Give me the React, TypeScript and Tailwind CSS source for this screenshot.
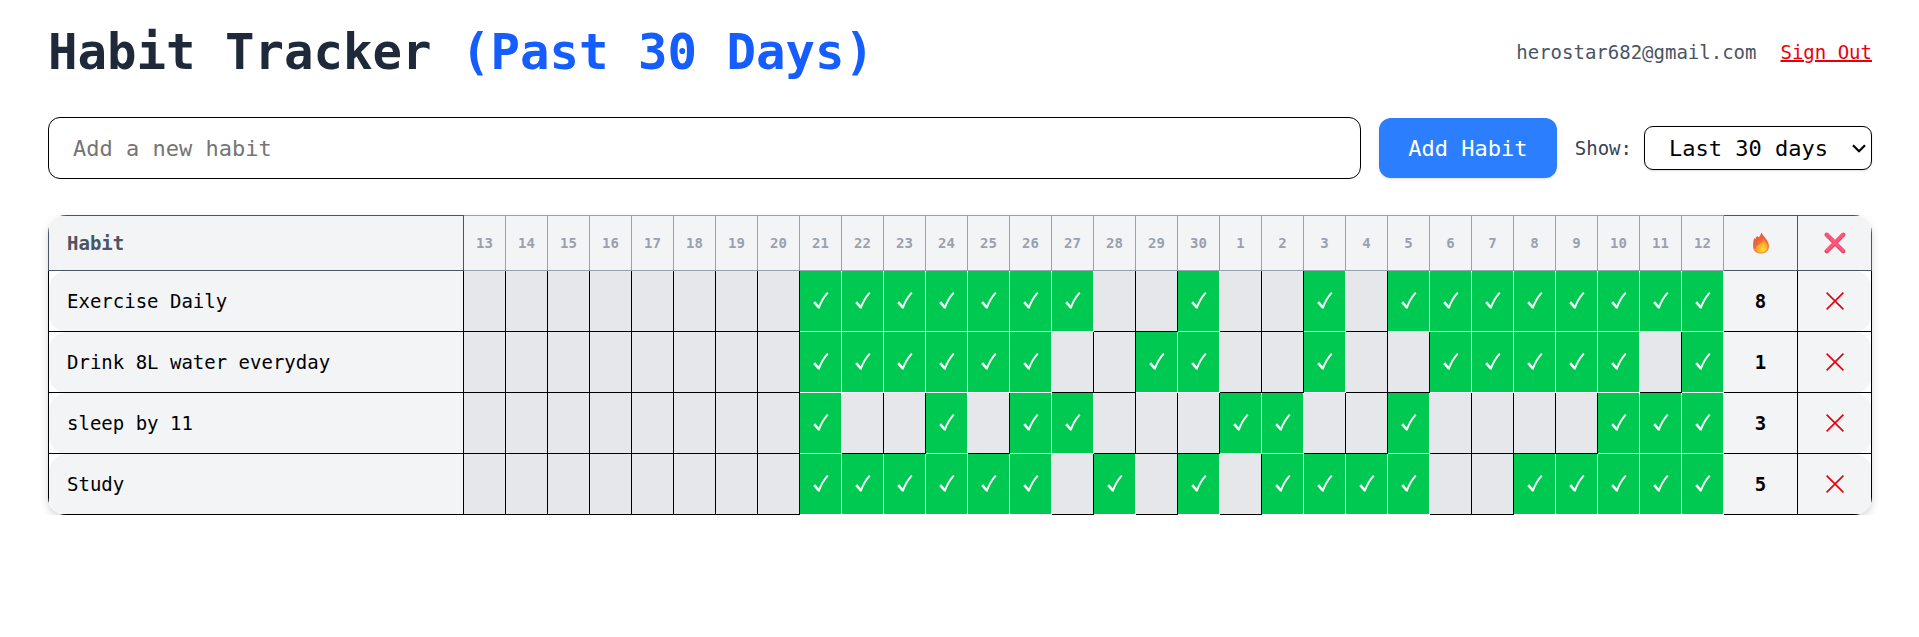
import React from "react";

const days = [13, 14, 15, 16, 17, 18, 19, 20, 21, 22, 23, 24, 25, 26, 27, 28, 29, 30, 1, 2, 3, 4, 5, 6, 7, 8, 9, 10, 11, 12];

const habits = [
  { name: "Exercise Daily", marks: "000000001111111001001011111111", streak: 8 },
  { name: "Drink 8L water everyday", marks: "000000001111110011001001111101", streak: 1 },
  { name: "sleep by 11", marks: "000000001001011000110010000111", streak: 3 },
  { name: "Study", marks: "000000001111110101011110011111", streak: 5 },
];

function Check() {
  return (
    <svg viewBox="0 0 16 18" className="mx-auto h-[18px] w-4" fill="none" stroke="currentColor" aria-hidden="true">
      <path d="M1.200 10.200 L6 15.600" strokeWidth="2.500" />
      <path d="M5.600 16.400 C7.600 10.800 10.600 5 14.800 .6" strokeWidth="1.900" />
    </svg>
  );
}

function Cross() {
  return (
    <svg viewBox="0 0 18 18" className="mx-auto size-[18px]" fill="none" stroke="currentColor" strokeWidth="1.600" aria-hidden="true">
      <path d="M.6 .6 L17.400 17.400 M17.400 .6 L.6 17.400" />
    </svg>
  );
}

function Flame() {
  return (
    <svg viewBox="0 0 18 22" className="mx-auto h-[22px] w-[18px]" role="img" aria-label="Streak">
      <defs>
        <linearGradient id="flame" x1="0.5" y1="0" x2="0.5" y2="1">
          <stop offset="0" stopColor="#ee4f43" />
          <stop offset="0.5" stopColor="#f37038" />
          <stop offset="1" stopColor="#f88a35" />
        </linearGradient>
        <radialGradient id="glow" cx="0.6" cy="0.8" r="0.75">
          <stop offset="0" stopColor="#ffdf2e" />
          <stop offset="0.5" stopColor="#ffb52a" />
          <stop offset="1" stopColor="#f67a38" />
        </radialGradient>
      </defs>
      <path fill="url(#flame)" d="M9.600 .4C10.400 3.600 17 8 17 14.200c0 4.400-3.400 7.400-8 7.400S1 18.600 1 14.200C1 10.800 1.200 7.800 2.800 5.800l.4 1.600C3.600 5.800 4.400 4.600 5.800 4l.4 1.600C7.400 4.400 9 2.400 9.600 .4Z" />
      <path fill="none" stroke="#c9583a" strokeWidth=".7" d="M6.200 5.600C4.800 8 4.200 10 5 13M3.200 7.400C2.200 10 2.200 13 3.600 16" />
      <path fill="url(#glow)" d="M11 6.400c2.600 3.200 5 6 4.600 9.200-.4 3.200-2.800 5-6.200 5-3.400 0-5.600-1.600-5.600-4 0-2.600 2.200-3 4.200-4.600 2-1.400 3-3 3-5.600Z" />
    </svg>
  );
}

function BigCross() {
  return (
    <svg viewBox="0 0 22 22" className="mx-auto size-[22px]" fill="none" strokeLinecap="round" role="img" aria-label="Delete">
      <path d="M2.800 2.800 L19.200 19.200 M19.200 2.800 L2.800 19.200" stroke="#ea4458" strokeWidth="4.400" />
      <path d="M3 2.600 L19 18.600 M19 2.600 L3 18.600" stroke="#ff5585" strokeWidth="2.800" />
    </svg>
  );
}

export default function App() {
  return (
    <main className="bg-white pt-6 pr-[47px] pl-12 font-['DejaVu_Sans_Mono',monospace] text-[19px] text-black">
      <header className="mb-9 flex items-center justify-between">
        <h1 className="text-[49px] leading-[57px] font-bold text-gray-800">
          Habit Tracker <span className="text-blue-600">(Past 30 Days)</span>
        </h1>
        <div className="flex items-center gap-6">
          <span className="text-gray-600">herostar682@gmail.com</span>
          <button type="button" className="text-red-600 underline decoration-2">Sign Out</button>
        </div>
      </header>

      <form className="mb-9 flex items-center gap-[18px]" onSubmit={(e) => e.preventDefault()}>
        <input
          type="text"
          aria-label="New habit"
          placeholder="Add a new habit"
          className="h-[62px] min-w-0 flex-1 rounded-xl border border-black px-6 text-[22px] placeholder:text-[#757575]"
        />
        <button type="submit" className="h-[60px] w-[178px] rounded-xl bg-blue-500 text-[22px] text-white shadow-sm">
          Add Habit
        </button>
        <div className="flex items-center gap-3">
          <label htmlFor="range" className="text-gray-700">Show:</label>
          <div className="relative">
            <select
              id="range"
              defaultValue="30"
              className="h-11 w-[228px] appearance-none rounded-[9px] border border-black bg-white pl-6 text-[22px] shadow-sm"
            >
              <option value="7">Last 7 days</option>
              <option value="30">Last 30 days</option>
            </select>
            <svg
              viewBox="0 0 14 9"
              className="pointer-events-none absolute inset-y-0 right-1.5 my-auto h-[9px] w-3.5"
              fill="none"
              stroke="currentColor"
              strokeWidth="2.200"
              aria-hidden="true"
            >
              <path d="M1 1.200 L7 7.200 L13 1.200" />
            </svg>
          </div>
        </div>
      </form>

      <div className="overflow-hidden rounded-[18px] shadow-[0_4px_9px_rgba(0,0,0,0.16)]">
        <table className="w-full table-fixed border-collapse">
          <colgroup>
            <col />
            {days.map((d) => <col key={d} className="w-[42px]" />)}
            <col className="w-[74px]" />
            <col className="w-[74px]" />
          </colgroup>
          <thead>
            <tr className="h-[55px] bg-gray-100 text-gray-600">
              <th className="border border-gray-600 px-[18px] text-left">Habit</th>
              {days.map((d) => (
                <th key={d} className="border border-gray-400 text-[14px] text-gray-400">{d}</th>
              ))}
              <th className="border border-gray-600"><Flame /></th>
              <th className="border border-gray-600"><BigCross /></th>
            </tr>
          </thead>
          <tbody>
            {habits.map((h) => (
              <tr key={h.name} className="h-[61px]">
                <td className="rounded-l-[18px] border border-black bg-gray-100 px-[18px]">{h.name}</td>
                {days.map((d, i) =>
                  h.marks[i] === "1" ? (
                    <td key={d} className="border border-white bg-green-500 text-white"><Check /></td>
                  ) : (
                    <td key={d} className="border border-black bg-gray-200" />
                  )
                )}
                <td className="border border-black bg-gray-100 text-center font-bold">{h.streak}</td>
                <td className="rounded-r-[18px] border border-black bg-gray-100">
                  <button type="button" aria-label={`Delete ${h.name}`} className="mx-auto block text-red-600"><Cross /></button>
                </td>
              </tr>
            ))}
          </tbody>
        </table>
      </div>
    </main>
  );
}
